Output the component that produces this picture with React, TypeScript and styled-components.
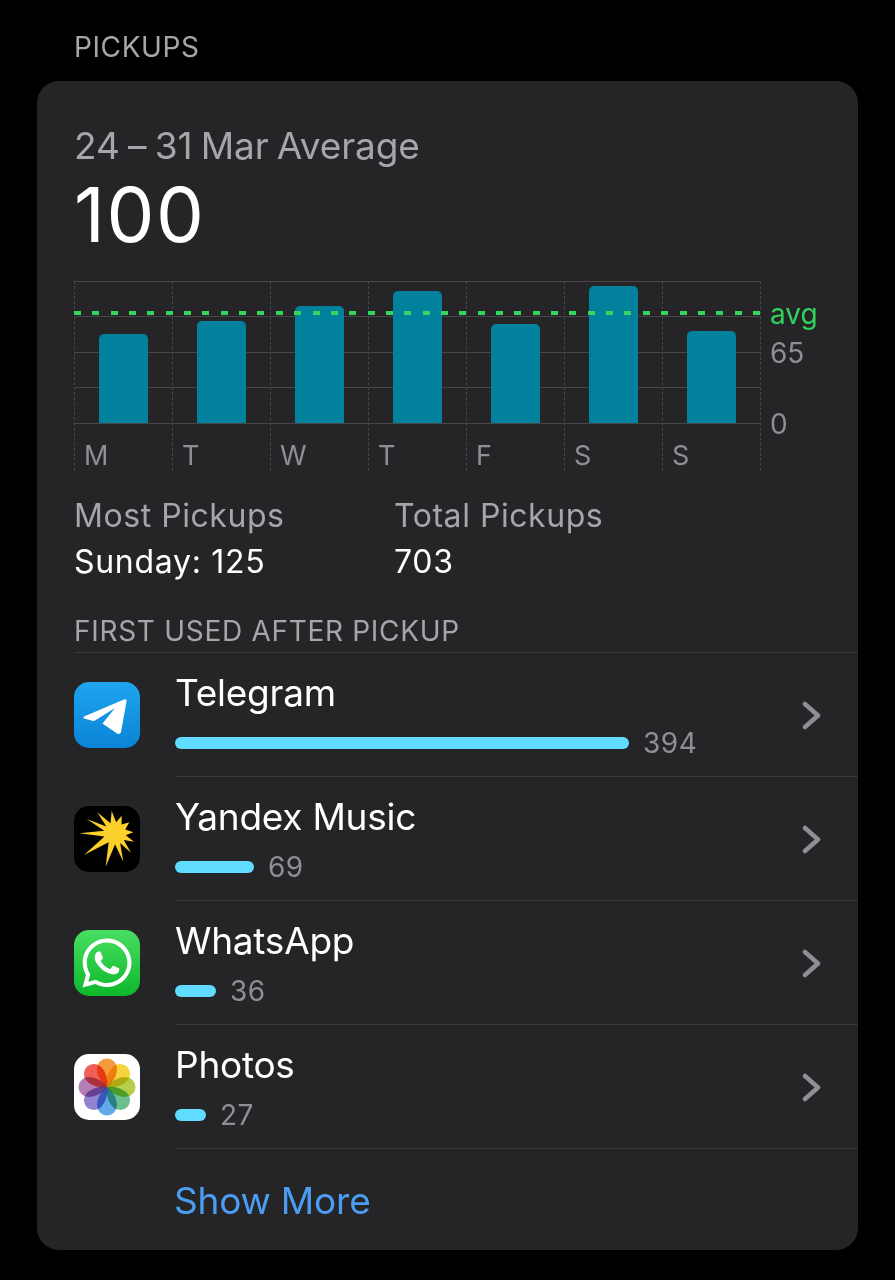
import React from "react";
import styled, { createGlobalStyle } from "styled-components";
import { FaWhatsapp } from "react-icons/fa";

const GlobalStyle = createGlobalStyle`
  html,
  body {
    margin: 0;
    padding: 0;
    background: #000;
    font-family: Inter, "Noto Sans", "Liberation Sans", sans-serif;
    -webkit-font-smoothing: antialiased;
  }
`;

const Page = styled.div`
  width: 895px;
  height: 1280px;
  padding: 31px 37px 0;
  box-sizing: border-box;
  overflow: hidden;
  background: #000;
`;

const SectionTitle = styled.div`
  height: 50px;
  padding-left: 37px;
  font-size: 28px;
  line-height: 32px;
  letter-spacing: 0.6px;
  color: #a6a6aa;
`;

const Card = styled.div`
  width: 821px;
  height: 1169px;
  padding: 43px 0 0 37px;
  box-sizing: border-box;
  border-radius: 22px;
  background: #252527;
  overflow: hidden;
`;

const Subtitle = styled.div`
  font-size: 37px;
  line-height: 44px;
  letter-spacing: -0.1px;
  word-spacing: -2px;
  color: #a6a6aa;
`;

const BigNumber = styled.div`
  margin-top: 4px;
  font-size: 76px;
  line-height: 84px;
  letter-spacing: 1.6px;
  color: #fff;
`;

const Chart = styled.div`
  display: flex;
  margin-top: 25px;
  height: 190px;
`;

const Columns = styled.div`
  position: relative;
  display: flex;
  width: 687px;
  border-right: 1px dashed #47474a;
  box-sizing: border-box;
`;

const AvgLine = styled.div`
  position: absolute;
  left: 0;
  right: 0;
  top: 30px;
  height: 4px;
  background: repeating-linear-gradient(
    to right,
    #34d660 0,
    #34d660 7px,
    transparent 7px,
    transparent 18.35px
  );
`;

const DayColumn = styled.div`
  width: 98px;
  border-left: 1px dashed #47474a;
  box-sizing: border-box;
`;

const PlotArea = styled.div`
  display: flex;
  align-items: flex-end;
  height: 143px;
  padding-left: 24px;
  box-sizing: border-box;
  border-top: 1px solid #47474a;
  border-bottom: 1px solid #47474a;
  background:
    linear-gradient(#47474a, #47474a) 0 34px / 100% 1px no-repeat,
    linear-gradient(#47474a, #47474a) 0 70px / 100% 1px no-repeat,
    linear-gradient(#47474a, #47474a) 0 105px / 100% 1px no-repeat;
`;

const Bar = styled.div<{ $value: number }>`
  width: 49px;
  height: ${(p) => p.$value}px;
  border-radius: 5px 5px 0 0;
  background: #02819c;
`;

const DayLabel = styled.div`
  padding: 16px 0 0 9px;
  font-size: 27px;
  line-height: 31px;
  color: #8e8e93;
`;

const Axis = styled.div`
  display: flex;
  flex-direction: column;
  width: 70px;
  padding: 17px 0 0 9px;
`;

const AxisLabel = styled.div<{ $green?: boolean; $gap?: number }>`
  margin-bottom: ${(p) => p.$gap ?? 0}px;
  font-size: 28px;
  line-height: 32px;
  color: ${(p) => (p.$green ? "#32d35c" : "#8e8e93")};
`;

const Stats = styled.div`
  display: flex;
  margin-top: 22px;
`;

const Stat = styled.div<{ $width: number }>`
  width: ${(p) => p.$width}px;
`;

const StatLabel = styled.div`
  font-size: 32px;
  line-height: 46px;
  letter-spacing: 0.55px;
  color: #a6a6aa;
`;

const StatValue = styled.div`
  font-size: 32px;
  line-height: 46px;
  letter-spacing: 0.7px;
  color: #fff;
`;

const ListTitle = styled.div`
  margin-top: 23px;
  height: 44px;
  font-size: 28px;
  line-height: 46px;
  letter-spacing: 0.7px;
  color: #a6a6aa;
`;

const List = styled.div`
  border-top: 1px solid #3a3a3c;
`;

const Row = styled.div`
  position: relative;
  display: flex;
  align-items: center;
  height: 124px;
  box-sizing: border-box;
`;

const RowBody = styled.div`
  flex: 1;
  align-self: stretch;
  margin-left: 35px;
  padding-top: 17px;
  box-sizing: border-box;
  border-bottom: 1px solid #3a3a3c;
`;

const AppName = styled.div`
  font-size: 37px;
  line-height: 46px;
  letter-spacing: -0.25px;
  color: #fff;
`;

const UsageLine = styled.div`
  display: flex;
  align-items: center;
  gap: 14px;
  margin-top: 11px;
  height: 32px;
`;

const UsageBar = styled.div<{ $width: number }>`
  width: ${(p) => p.$width}px;
  height: 12px;
  border-radius: 6px;
  background: #5fdcff;
`;

const UsageCount = styled.div`
  font-size: 28px;
  line-height: 32px;
  letter-spacing: 0.5px;
  color: #8e8e93;
`;

const Chevron = styled.svg`
  position: absolute;
  right: 36px;
  top: 47px;
  width: 20px;
  height: 30px;
  fill: none;
  stroke: #8e8e93;
  stroke-width: 4.5;
  stroke-linecap: round;
  stroke-linejoin: round;
`;

const IconTile = styled.div<{ $background: string }>`
  flex: none;
  display: flex;
  align-items: center;
  justify-content: center;
  width: 66px;
  height: 66px;
  border-radius: 15px;
  background: ${(p) => p.$background};
  overflow: hidden;
`;

const WhatsappGlyph = styled(FaWhatsapp)`
  width: 56px;
  height: 56px;
  color: #fff;
`;

const ShowMore = styled.div`
  padding: 30px 0 0 100px;
  font-size: 37px;
  line-height: 44px;
  letter-spacing: -0.2px;
  color: #4a9df0;
`;

const TelegramIcon = () => (
  <IconTile $background="linear-gradient(180deg, #1fa5f0 0%, #0a84d6 100%)">
    <svg width="66" height="66" viewBox="0 0 66 66">
      <path
        d="M10 34.500 L50 17.500 Q53 16.500 52.500 19.500 L47 50 Q46 53 43 51.500 L28.500 41.500 L41 26 L21 38.500 Q19.500 39.300 17.500 38.500 L10 36.500 Q8.500 35.300 10 34.500 Z"
        fill="#fff"
      />
    </svg>
  </IconTile>
);

// ray tips of the star, clockwise from the left
const starTips = [
  [5.3, 27.3], [12.7, 13], [23.3, 6.3], [37.7, 5], [47.7, 9.7], [55.3, 16.3],
  [59.3, 26.3], [60, 35.7], [57, 46.7], [49.3, 55.7], [31.7, 60.7], [10, 49],
];

const starPoints = () => {
  const cx = 41;
  const cy = 27.3;
  const inner = 11;
  const points: string[] = [];
  starTips.forEach(([x, y], i) => {
    const [nx, ny] = starTips[(i + 1) % starTips.length];
    const a = Math.atan2(y - cy, x - cx);
    let b = Math.atan2(ny - cy, nx - cx);
    if (b < a) b += Math.PI * 2;
    const mid = (a + b) / 2;
    points.push(`${x},${y}`);
    points.push(`${cx + Math.cos(mid) * inner},${cy + Math.sin(mid) * inner}`);
  });
  return points.join(" ");
};

const YandexIcon = () => (
  <IconTile $background="#000">
    <svg width="66" height="66" viewBox="0 0 66 66">
      <polygon points={starPoints()} fill="#fcd02a" />
    </svg>
  </IconTile>
);

const WhatsappIcon = () => (
  <IconTile $background="linear-gradient(180deg, #48de62 0%, #0db82a 100%)">
    <WhatsappGlyph />
  </IconTile>
);

const petalColors = [
  "#f59a3a", "#f5d33a", "#b5cf4c", "#6cc08f",
  "#62a9e8", "#9183cf", "#b57db5", "#ef5f58",
];

const PhotosIcon = () => (
  <IconTile $background="#fff">
    <svg width="66" height="66" viewBox="0 0 66 66">
      {petalColors.map((color, i) => (
        <path
          key={color}
          d="M33 33 C26 28 23 20 23 14.500 A10 10 0 0 1 43 14.500 C43 20 40 28 33 33 Z"
          fill={color}
          style={{ mixBlendMode: "multiply" }}
          transform={`rotate(${i * 45} 33 33)`}
        />
      ))}
    </svg>
  </IconTile>
);

const days = [
  { label: "M", value: 89 },
  { label: "T", value: 102 },
  { label: "W", value: 117 },
  { label: "T", value: 132 },
  { label: "F", value: 99 },
  { label: "S", value: 137 },
  { label: "S", value: 92 },
];

const apps = [
  { name: "Telegram", count: 394, width: 454, icon: <TelegramIcon /> },
  { name: "Yandex Music", count: 69, width: 79, icon: <YandexIcon /> },
  { name: "WhatsApp", count: 36, width: 41, icon: <WhatsappIcon /> },
  { name: "Photos", count: 27, width: 31, icon: <PhotosIcon /> },
];

const App: React.FC = () => (
  <Page>
    <GlobalStyle />
    <SectionTitle>PICKUPS</SectionTitle>
    <Card>
      <Subtitle>24 – 31 Mar Average</Subtitle>
      <BigNumber>100</BigNumber>
      <Chart>
        <Columns>
          {days.map((day, i) => (
            <DayColumn key={i}>
              <PlotArea>
                <Bar $value={day.value} />
              </PlotArea>
              <DayLabel>{day.label}</DayLabel>
            </DayColumn>
          ))}
          <AvgLine />
        </Columns>
        <Axis>
          <AxisLabel $green $gap={7}>avg</AxisLabel>
          <AxisLabel $gap={39}>65</AxisLabel>
          <AxisLabel>0</AxisLabel>
        </Axis>
      </Chart>
      <Stats>
        <Stat $width={320}>
          <StatLabel>Most Pickups</StatLabel>
          <StatValue>Sunday: 125</StatValue>
        </Stat>
        <Stat $width={300}>
          <StatLabel>Total Pickups</StatLabel>
          <StatValue>703</StatValue>
        </Stat>
      </Stats>
      <ListTitle>FIRST USED AFTER PICKUP</ListTitle>
      <List>
        {apps.map((app) => (
          <Row key={app.name}>
            {app.icon}
            <RowBody>
              <AppName>{app.name}</AppName>
              <UsageLine>
                <UsageBar $width={app.width} />
                <UsageCount>{app.count}</UsageCount>
              </UsageLine>
            </RowBody>
            <Chevron viewBox="0 0 20 30">
              <path d="M3 4 L16 15.500 L3 27" />
            </Chevron>
          </Row>
        ))}
      </List>
      <ShowMore>Show More</ShowMore>
    </Card>
  </Page>
);

export default App;
